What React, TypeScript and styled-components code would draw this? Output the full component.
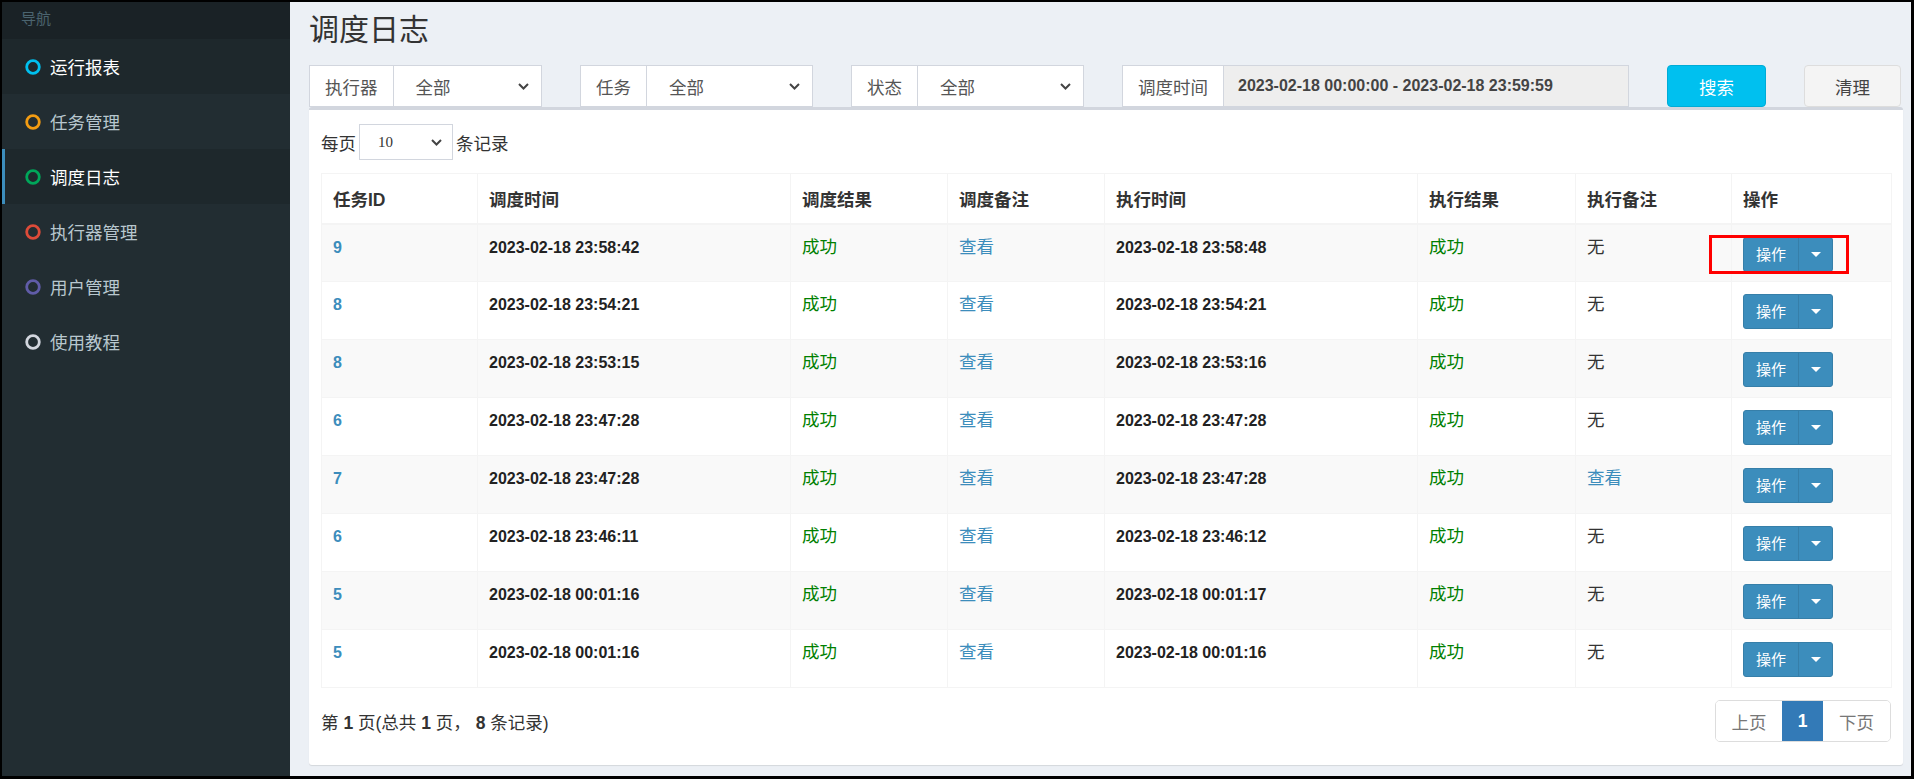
import React from 'react';
import styled, { createGlobalStyle } from 'styled-components';

const GlobalStyle = createGlobalStyle`
  html, body {
    margin: 0;
    padding: 0;
    font-family: "Liberation Sans", "Noto Sans CJK SC", sans-serif;
    color: #333;
  }
  * { box-sizing: border-box; }
`;

const Frame = styled.div`
  width: 1914px;
  height: 779px;
  display: flex;
  overflow: hidden;
  background: #ecf0f5;
  border-style: solid;
  border-color: #000;
  border-width: 2px 3px 3px 2px;
`;

const Sidebar = styled.aside`
  width: 288px;
  flex-shrink: 0;
  background: #222d32;
  display: flex;
  flex-direction: column;
`;

const NavHeader = styled.div`
  height: 37px;
  background: #1a2226;
  color: #4b646f;
  font-size: 15px;
  padding: 5px 0 0 19px;
`;

const NavItem = styled.div<{ tone: 'idle' | 'hover' | 'active' }>`
  height: 55px;
  display: flex;
  align-items: center;
  gap: 9px;
  padding-left: 20px;
  border-left: 3px solid ${({ tone }) => (tone === 'active' ? '#3c8dbc' : 'transparent')};
  background: ${({ tone }) => (tone === 'idle' ? '#222d32' : '#1e282c')};
  color: ${({ tone }) => (tone === 'idle' ? '#b8c7ce' : '#fff')};
  font-size: 17.5px;
`;

const Main = styled.main`
  flex: 1;
  padding: 0 9px 0 19px;
  display: flex;
  flex-direction: column;
`;

const Title = styled.h1`
  margin: 11px 0 18px;
  font-size: 30px;
  line-height: 34px;
  font-weight: normal;
  color: #333;
`;

const FilterRow = styled.div`
  display: flex;
  gap: 38px;
  height: 42px;
`;

const InputGroup = styled.div<{ w: number }>`
  width: ${({ w }) => w}px;
  display: flex;
  height: 42px;
`;

const GroupLabel = styled.span`
  display: flex;
  align-items: center;
  padding: 0 15px;
  background: #fff;
  border: 1px solid #d2d6de;
  color: #555;
  font-size: 17.5px;
  white-space: nowrap;
`;

const FakeSelect = styled.div`
  flex: 1;
  display: flex;
  align-items: center;
  justify-content: space-between;
  padding: 0 12px 0 22px;
  background: #fff;
  border: 1px solid #d2d6de;
  border-left: none;
  color: #555;
  font-size: 17.5px;
`;

const DateInput = styled.div`
  flex: 1;
  display: flex;
  align-items: center;
  padding: 0 14px;
  background: #eee;
  border: 1px solid #d2d6de;
  border-left: none;
  color: #444;
  font-size: 16px;
  font-weight: bold;
`;

const Btn = styled.button<{ kind: 'info' | 'default' }>`
  width: ${({ kind }) => (kind === 'info' ? 99 : 97)}px;
  height: 42px;
  border-radius: 4px;
  font-family: inherit;
  font-size: 17.5px;
  border: 1px solid ${({ kind }) => (kind === 'info' ? '#00acd6' : '#ddd')};
  background: ${({ kind }) => (kind === 'info' ? '#00c0ef' : '#f4f4f4')};
  color: ${({ kind }) => (kind === 'info' ? '#fff' : '#444')};
  padding: 0;
`;

const Box = styled.section`
  height: 658px;
  background: #fff;
  border-top: 3px solid #d2d6de;
  border-radius: 3px;
  box-shadow: 0 1px 1px rgba(0, 0, 0, 0.1);
  padding: 14px 11px 0 12px;
  display: flex;
  flex-direction: column;
`;

const LengthRow = styled.div`
  display: flex;
  align-items: center;
  gap: 3px;
  font-size: 17.5px;
  color: #333;
  height: 36px;
`;

const LengthSelect = styled.div`
  width: 94px;
  height: 36px;
  border: 1px solid #d2d6de;
  display: flex;
  align-items: center;
  justify-content: space-between;
  padding: 0 10px 0 18px;
  font-family: "Liberation Serif", serif;
  font-size: 15px;
  color: #333;
`;

const Table = styled.table`
  margin-top: 13px;
  width: 1570px;
  table-layout: fixed;
  border-collapse: collapse;
  font-size: 17.5px;
`;

const Th = styled.th`
  height: 50px;
  text-align: left;
  padding: 0 11px;
  font-weight: bold;
  color: #333;
  border: 1px solid #f4f4f4;
  border-bottom-width: 2px;
`;

const Tr = styled.tr<{ striped: boolean }>`
  background: ${({ striped }) => (striped ? '#f9f9f9' : '#fff')};
`;

const Td = styled.td`
  height: 58px;
  vertical-align: top;
  padding: 10px 11px 0;
  line-height: 25px;
  border: 1px solid #f4f4f4;
  position: relative;
`;

const IdLink = styled.span`
  color: #3c8dbc;
  font-weight: bold;
  font-size: 16px;
`;

const Stamp = styled.span`
  font-weight: bold;
  font-size: 16px;
  color: #222;
`;

const Ok = styled.span`
  color: #008000;
`;

const Link = styled.span`
  color: #3c8dbc;
`;

const SplitBtn = styled.div`
  display: inline-flex;
  height: 35px;
  margin-top: 2px;
  border-radius: 3px;
  overflow: hidden;
  background: #3c8dbc;
  border: 1px solid #367fa9;
`;

const SplitMain = styled.span`
  width: 54px;
  display: flex;
  align-items: center;
  justify-content: center;
  color: #fff;
  font-size: 15px;
`;

const SplitCaret = styled.span`
  width: 34px;
  display: flex;
  align-items: center;
  justify-content: center;
  border-left: 1px solid #367fa9;
  &::after {
    content: '';
    border-top: 5px solid #fff;
    border-left: 5px solid transparent;
    border-right: 5px solid transparent;
  }
`;

const Marker = styled.span`
  position: absolute;
  left: -23px;
  top: 10px;
  width: 140px;
  height: 39px;
  border: 3px solid #f00;
  pointer-events: none;
`;

const Footer = styled.div`
  margin-top: 12px;
  display: flex;
  justify-content: space-between;
  align-items: center;
  width: 1570px;
`;

const Info = styled.div`
  font-size: 17.5px;
  color: #333;
  b { font-weight: bold; }
`;

const Pager = styled.div`
  display: flex;
  height: 42px;
  border: 1px solid #ddd;
  border-radius: 5px;
  overflow: hidden;
`;

const PageCell = styled.span<{ active?: boolean; w: number }>`
  width: ${({ w }) => w}px;
  display: flex;
  align-items: center;
  justify-content: center;
  font-size: 17.5px;
  background: ${({ active }) => (active ? '#337ab7' : '#fff')};
  color: ${({ active }) => (active ? '#fff' : '#777')};
  font-weight: ${({ active }) => (active ? 'bold' : 'normal')};
`;

const Ring = ({ color }: { color: string }) => (
  <svg width="16" height="16" viewBox="0 0 16 16">
    <circle cx="8" cy="8" r="6.3" fill="none" stroke={color} strokeWidth="2.8" />
  </svg>
);

const Chevron = () => (
  <svg width="11" height="7" viewBox="0 0 11 7">
    <polyline points="1,1 5.5,5.5 10,1" fill="none" stroke="#444" strokeWidth="2" />
  </svg>
);

const navItems: { label: string; color: string; tone: 'idle' | 'hover' | 'active' }[] = [
  { label: '运行报表', color: '#00c0ef', tone: 'hover' },
  { label: '任务管理', color: '#f39c12', tone: 'idle' },
  { label: '调度日志', color: '#00a65a', tone: 'active' },
  { label: '执行器管理', color: '#dd4b39', tone: 'idle' },
  { label: '用户管理', color: '#605ca8', tone: 'idle' },
  { label: '使用教程', color: '#d2d6de', tone: 'idle' },
];

const rows = [
  { id: 9, trigger: '2023-02-18 23:58:42', handle: '2023-02-18 23:58:48', note: '无' },
  { id: 8, trigger: '2023-02-18 23:54:21', handle: '2023-02-18 23:54:21', note: '无' },
  { id: 8, trigger: '2023-02-18 23:53:15', handle: '2023-02-18 23:53:16', note: '无' },
  { id: 6, trigger: '2023-02-18 23:47:28', handle: '2023-02-18 23:47:28', note: '无' },
  { id: 7, trigger: '2023-02-18 23:47:28', handle: '2023-02-18 23:47:28', note: '查看' },
  { id: 6, trigger: '2023-02-18 23:46:11', handle: '2023-02-18 23:46:12', note: '无' },
  { id: 5, trigger: '2023-02-18 00:01:16', handle: '2023-02-18 00:01:17', note: '无' },
  { id: 5, trigger: '2023-02-18 00:01:16', handle: '2023-02-18 00:01:16', note: '无' },
];

const colWidths = [156, 313, 157, 157, 313, 158, 156, 160];
const headers = ['任务ID', '调度时间', '调度结果', '调度备注', '执行时间', '执行结果', '执行备注', '操作'];

const App: React.FC = () => (
  <>
    <GlobalStyle />
    <Frame>
      <Sidebar>
        <NavHeader>导航</NavHeader>
        {navItems.map((item) => (
          <NavItem key={item.label} tone={item.tone}>
            <Ring color={item.color} />
            {item.label}
          </NavItem>
        ))}
      </Sidebar>

      <Main>
        <Title>调度日志</Title>

        <FilterRow>
          <InputGroup w={233}>
            <GroupLabel>执行器</GroupLabel>
            <FakeSelect>全部<Chevron /></FakeSelect>
          </InputGroup>
          <InputGroup w={233}>
            <GroupLabel>任务</GroupLabel>
            <FakeSelect>全部<Chevron /></FakeSelect>
          </InputGroup>
          <InputGroup w={233}>
            <GroupLabel>状态</GroupLabel>
            <FakeSelect>全部<Chevron /></FakeSelect>
          </InputGroup>
          <InputGroup w={507}>
            <GroupLabel>调度时间</GroupLabel>
            <DateInput>2023-02-18 00:00:00 - 2023-02-18 23:59:59</DateInput>
          </InputGroup>
          <Btn kind="info">搜索</Btn>
          <Btn kind="default">清理</Btn>
        </FilterRow>

        <Box>
          <LengthRow>
            每页
            <LengthSelect>10<Chevron /></LengthSelect>
            条记录
          </LengthRow>

          <Table>
            <colgroup>
              {colWidths.map((w, i) => (
                <col key={i} style={{ width: w }} />
              ))}
            </colgroup>
            <thead>
              <tr>
                {headers.map((h) => (
                  <Th key={h}>{h}</Th>
                ))}
              </tr>
            </thead>
            <tbody>
              {rows.map((r, i) => (
                <Tr key={i} striped={i % 2 === 0}>
                  <Td><IdLink>{r.id}</IdLink></Td>
                  <Td><Stamp>{r.trigger}</Stamp></Td>
                  <Td><Ok>成功</Ok></Td>
                  <Td><Link>查看</Link></Td>
                  <Td><Stamp>{r.handle}</Stamp></Td>
                  <Td><Ok>成功</Ok></Td>
                  <Td>{r.note === '查看' ? <Link>查看</Link> : r.note}</Td>
                  <Td>
                    <SplitBtn>
                      <SplitMain>操作</SplitMain>
                      <SplitCaret />
                    </SplitBtn>
                    {i === 0 && <Marker />}
                  </Td>
                </Tr>
              ))}
            </tbody>
          </Table>

          <Footer>
            <Info>
              第 <b>1</b> 页(总共 <b>1</b> 页， <b>8</b> 条记录)
            </Info>
            <Pager>
              <PageCell w={66}>上页</PageCell>
              <PageCell w={41} active>1</PageCell>
              <PageCell w={67}>下页</PageCell>
            </Pager>
          </Footer>
        </Box>
      </Main>
    </Frame>
  </>
);

export default App;
